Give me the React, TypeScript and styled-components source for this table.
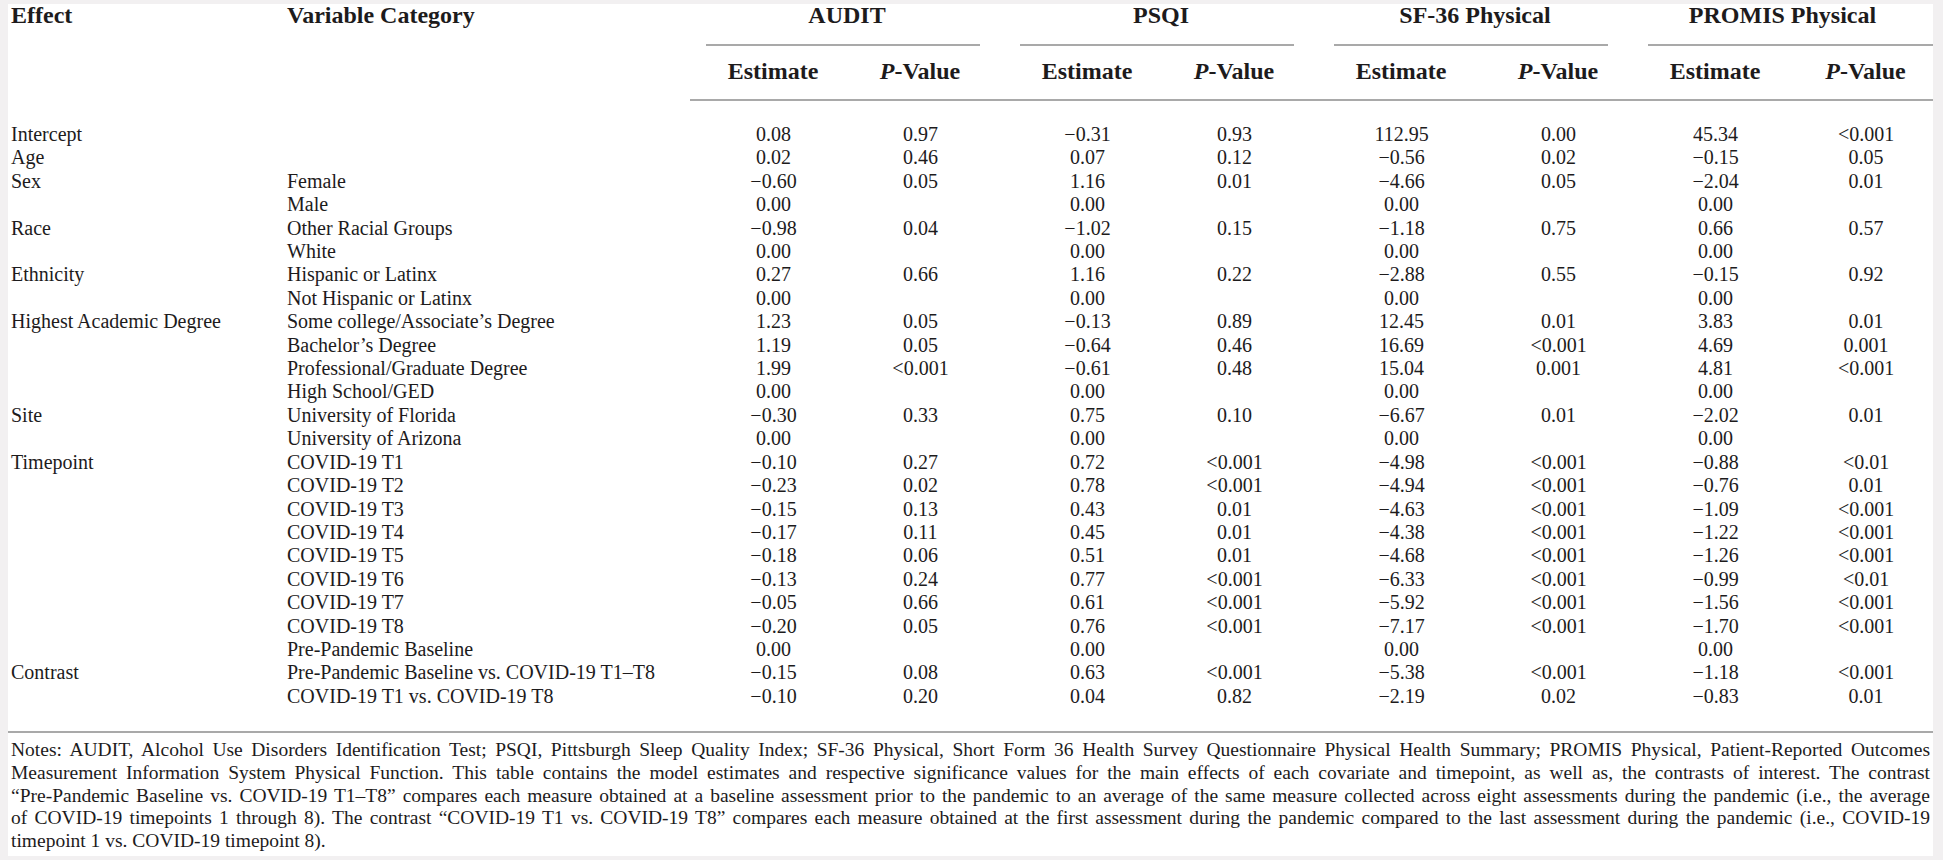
import React from "react";
import styled, { createGlobalStyle } from "styled-components";

const GlobalStyle = createGlobalStyle`
  html, body { margin: 0; padding: 0; background: #f2f0f1; }
  body { font-family: "Liberation Serif", "Times New Roman", serif; color: #1d1b1c; }
`;

const Page = styled.div`
  padding: 4px 10px 5px 8px;
  background: #f2f0f1;
`;

const Panel = styled.div`
  background: #ffffff;
  display: flex;
  flex-direction: column;
`;

const Table = styled.table`
  width: 100%;
  border-collapse: collapse;
  table-layout: fixed;
  font-size: 20px;
`;

const HeadCell = styled.th<{ $first?: boolean }>`
  font-weight: bold;
  font-size: 24px;
  line-height: 22px;
  text-align: left;
  vertical-align: top;
  padding: 0 0 0 ${(p) => (p.$first ? "3px" : "0")};
  white-space: nowrap;
`;

const GroupCell = styled.th`
  font-weight: bold;
  font-size: 24px;
  line-height: 22px;
  text-align: center;
  vertical-align: top;
  padding: 0;
  white-space: nowrap;
`;

const GroupLabel = styled.div`
  padding-bottom: 18px;
`;

const GroupRule = styled.div<{ $last?: boolean }>`
  height: 2px;
  background: #a9a9a9;
  margin: 0 ${(p) => (p.$last ? "0" : "24px")} 0 16px;
`;

const SubCell = styled.th<{ $pr?: number }>`
  font-weight: bold;
  font-size: 24px;
  line-height: 26px;
  text-align: center;
  padding: 12px ${(p) => p.$pr || 0}px 15px 0;
  white-space: nowrap;
`;

const Italic = styled.i`
  font-style: italic;
`;

const HeadRow = styled.tr<{ $rule?: boolean }>`
  & > th {
    border-bottom: ${(p) => (p.$rule ? "2px solid #a9a9a9" : "none")};
  }
`;

const BodyRow = styled.tr<{ $first?: boolean; $last?: boolean }>`
  & > td {
    padding-top: ${(p) => (p.$first ? "22px" : "0")};
    padding-bottom: ${(p) => (p.$last ? "23px" : "0")};
    border-bottom: ${(p) => (p.$last ? "2px solid #a9a9a9" : "none")};
  }
`;

const LabelCell = styled.td<{ $first?: boolean }>`
  line-height: 23.4px;
  text-align: left;
  white-space: nowrap;
  padding-left: ${(p) => (p.$first ? "3px" : "0")};
`;

const NumCell = styled.td<{ $pr?: number }>`
  line-height: 23.4px;
  text-align: center;
  white-space: nowrap;
  padding-right: ${(p) => p.$pr || 0}px;
`;

const Notes = styled.div`
  padding: 6px 3px 3px 3px;
  font-size: 19.5px;
  line-height: 22.75px;
`;

const NoteLine = styled.div<{ $last?: boolean }>`
  text-align: justify;
  text-align-last: ${(p) => (p.$last ? "left" : "justify")};
  white-space: nowrap;
`;

const M = "\u2212";

type Row = [string, string, string, string, string, string, string, string, string, string];

const rows: Row[] = [
  ["Intercept", "", "0.08", "0.97", `${M}0.31`, "0.93", "112.95", "0.00", "45.34", "<0.001"],
  ["Age", "", "0.02", "0.46", "0.07", "0.12", `${M}0.56`, "0.02", `${M}0.15`, "0.05"],
  ["Sex", "Female", `${M}0.60`, "0.05", "1.16", "0.01", `${M}4.66`, "0.05", `${M}2.04`, "0.01"],
  ["", "Male", "0.00", "", "0.00", "", "0.00", "", "0.00", ""],
  ["Race", "Other Racial Groups", `${M}0.98`, "0.04", `${M}1.02`, "0.15", `${M}1.18`, "0.75", "0.66", "0.57"],
  ["", "White", "0.00", "", "0.00", "", "0.00", "", "0.00", ""],
  ["Ethnicity", "Hispanic or Latinx", "0.27", "0.66", "1.16", "0.22", `${M}2.88`, "0.55", `${M}0.15`, "0.92"],
  ["", "Not Hispanic or Latinx", "0.00", "", "0.00", "", "0.00", "", "0.00", ""],
  ["Highest Academic Degree", "Some college/Associate\u2019s Degree", "1.23", "0.05", `${M}0.13`, "0.89", "12.45", "0.01", "3.83", "0.01"],
  ["", "Bachelor\u2019s Degree", "1.19", "0.05", `${M}0.64`, "0.46", "16.69", "<0.001", "4.69", "0.001"],
  ["", "Professional/Graduate Degree", "1.99", "<0.001", `${M}0.61`, "0.48", "15.04", "0.001", "4.81", "<0.001"],
  ["", "High School/GED", "0.00", "", "0.00", "", "0.00", "", "0.00", ""],
  ["Site", "University of Florida", `${M}0.30`, "0.33", "0.75", "0.10", `${M}6.67`, "0.01", `${M}2.02`, "0.01"],
  ["", "University of Arizona", "0.00", "", "0.00", "", "0.00", "", "0.00", ""],
  ["Timepoint", "COVID-19 T1", `${M}0.10`, "0.27", "0.72", "<0.001", `${M}4.98`, "<0.001", `${M}0.88`, "<0.01"],
  ["", "COVID-19 T2", `${M}0.23`, "0.02", "0.78", "<0.001", `${M}4.94`, "<0.001", `${M}0.76`, "0.01"],
  ["", "COVID-19 T3", `${M}0.15`, "0.13", "0.43", "0.01", `${M}4.63`, "<0.001", `${M}1.09`, "<0.001"],
  ["", "COVID-19 T4", `${M}0.17`, "0.11", "0.45", "0.01", `${M}4.38`, "<0.001", `${M}1.22`, "<0.001"],
  ["", "COVID-19 T5", `${M}0.18`, "0.06", "0.51", "0.01", `${M}4.68`, "<0.001", `${M}1.26`, "<0.001"],
  ["", "COVID-19 T6", `${M}0.13`, "0.24", "0.77", "<0.001", `${M}6.33`, "<0.001", `${M}0.99`, "<0.01"],
  ["", "COVID-19 T7", `${M}0.05`, "0.66", "0.61", "<0.001", `${M}5.92`, "<0.001", `${M}1.56`, "<0.001"],
  ["", "COVID-19 T8", `${M}0.20`, "0.05", "0.76", "<0.001", `${M}7.17`, "<0.001", `${M}1.70`, "<0.001"],
  ["", "Pre-Pandemic Baseline", "0.00", "", "0.00", "", "0.00", "", "0.00", ""],
  ["Contrast", "Pre-Pandemic Baseline vs. COVID-19 T1\u2013T8", `${M}0.15`, "0.08", "0.63", "<0.001", `${M}5.38`, "<0.001", `${M}1.18`, "<0.001"],
  ["", "COVID-19 T1 vs. COVID-19 T8", `${M}0.10`, "0.20", "0.04", "0.82", `${M}2.19`, "0.02", `${M}0.83`, "0.01"],
];

const groups = [
  { name: "AUDIT", pr: 20 },
  { name: "PSQI", pr: 20 },
  { name: "SF-36 Physical", pr: 0 },
  { name: "PROMIS Physical", pr: 0 },
];

const colWidths = [279, 403, 166, 148, 166, 148, 166, 148, 166, 135];

const noteLines = [
  "Notes: AUDIT, Alcohol Use Disorders Identification Test; PSQI, Pittsburgh Sleep Quality Index; SF-36 Physical, Short Form 36 Health Survey Questionnaire Physical Health Summary; PROMIS Physical, Patient-Reported Outcomes",
  "Measurement Information System Physical Function. This table contains the model estimates and respective significance values for the main effects of each covariate and timepoint, as well as, the contrasts of interest. The contrast",
  "\u201cPre-Pandemic Baseline vs. COVID-19 T1\u2013T8\u201d compares each measure obtained at a baseline assessment prior to the pandemic to an average of the same measure collected across eight assessments during the pandemic (i.e., the average",
  "of COVID-19 timepoints 1 through 8). The contrast \u201cCOVID-19 T1 vs. COVID-19 T8\u201d compares each measure obtained at the first assessment during the pandemic compared to the last assessment during the pandemic (i.e., COVID-19",
  "timepoint 1 vs. COVID-19 timepoint 8).",
];

export default function App() {
  return (
    <>
      <GlobalStyle />
      <Page>
        <Panel>
          <Table>
            <colgroup>
              {colWidths.map((w, i) => (
                <col key={i} style={{ width: w }} />
              ))}
            </colgroup>
            <thead>
              <HeadRow>
                <HeadCell rowSpan={2} $first>
                  Effect
                </HeadCell>
                <HeadCell rowSpan={2}>Variable Category</HeadCell>
                {groups.map((g, i) => (
                  <GroupCell key={g.name} colSpan={2}>
                    <GroupLabel>{g.name}</GroupLabel>
                    <GroupRule $last={i === groups.length - 1} />
                  </GroupCell>
                ))}
              </HeadRow>
              <HeadRow $rule>
                {groups.map((g) => (
                  <React.Fragment key={g.name}>
                    <SubCell>Estimate</SubCell>
                    <SubCell $pr={g.pr}>
                      <Italic>P</Italic>-Value
                    </SubCell>
                  </React.Fragment>
                ))}
              </HeadRow>
            </thead>
            <tbody>
              {rows.map((r, i) => (
                <BodyRow key={i} $first={i === 0} $last={i === rows.length - 1}>
                  <LabelCell $first>{r[0]}</LabelCell>
                  <LabelCell>{r[1]}</LabelCell>
                  {groups.map((g, gi) => (
                    <React.Fragment key={g.name}>
                      <NumCell>{r[2 + gi * 2]}</NumCell>
                      <NumCell $pr={g.pr}>{r[3 + gi * 2]}</NumCell>
                    </React.Fragment>
                  ))}
                </BodyRow>
              ))}
            </tbody>
          </Table>
          <Notes>
            {noteLines.map((l, i) => (
              <NoteLine key={i} $last={i === noteLines.length - 1}>
                {l}
              </NoteLine>
            ))}
          </Notes>
        </Panel>
      </Page>
    </>
  );
}
